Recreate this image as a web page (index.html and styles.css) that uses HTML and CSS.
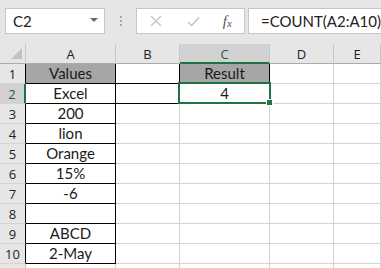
FILE: index.html
```html
<!DOCTYPE html>
<html lang="en">
<head>
    <meta charset="UTF-8">
    <meta name="viewport" content="width=device-width, initial-scale=1.0">
    <title>COUNT example</title>
    <link rel="stylesheet" href="styles.css">
</head>
<body>
    <div class="toolbar">
        <div class="namebox">
            <span>C2</span>
            <svg class="dropdown" width="8" height="5" viewBox="0 0 8 5"><path d="M0 0 H8 L4 4 Z" fill="#6b6b6b"/></svg>
        </div>
        <div class="grip"><i></i><i></i><i></i></div>
        <div class="fxbox">
            <svg width="12" height="12" viewBox="0 0 12 12"><path d="M1 1 L11 11 M11 1 L1 11" stroke="#c2c2c2" stroke-width="1.3" fill="none"/></svg>
            <svg width="13" height="11" viewBox="0 0 13 11"><path d="M1 6 L4.5 9.5 L12 1.5" stroke="#c2c2c2" stroke-width="1.4" fill="none"/></svg>
            <span class="fx">f<sub>x</sub></span>
        </div>
        <div class="formula">=COUNT(A2:A10)</div>
    </div>

    <div class="sheet">
        <!-- column headers -->
        <div class="corner"><span class="tri"></span></div>
        <div class="colhead">A</div>
        <div class="colhead">B</div>
        <div class="colhead active">C</div>
        <div class="colhead">D</div>
        <div class="colhead">E</div>

        <div class="rowhead edge">1</div>
        <div class="cell boxed title">Values</div>
        <div class="cell boxed"></div>
        <div class="cell boxed title">Result</div>
        <div class="cell"></div>
        <div class="cell"></div>

        <div class="rowhead active">2</div>
        <div class="cell boxed">Excel</div>
        <div class="cell boxed"></div>
        <div class="cell boxed selected">4</div>
        <div class="cell"></div>
        <div class="cell"></div>

        <div class="rowhead edge">3</div>
        <div class="cell boxed">200</div>
        <div class="cell"></div>
        <div class="cell"></div>
        <div class="cell"></div>
        <div class="cell"></div>

        <div class="rowhead edge">4</div>
        <div class="cell boxed">lion</div>
        <div class="cell"></div>
        <div class="cell"></div>
        <div class="cell"></div>
        <div class="cell"></div>

        <div class="rowhead edge">5</div>
        <div class="cell boxed">Orange</div>
        <div class="cell"></div>
        <div class="cell"></div>
        <div class="cell"></div>
        <div class="cell"></div>

        <div class="rowhead edge">6</div>
        <div class="cell boxed">15%</div>
        <div class="cell"></div>
        <div class="cell"></div>
        <div class="cell"></div>
        <div class="cell"></div>

        <div class="rowhead edge">7</div>
        <div class="cell boxed">-6</div>
        <div class="cell"></div>
        <div class="cell"></div>
        <div class="cell"></div>
        <div class="cell"></div>

        <div class="rowhead edge">8</div>
        <div class="cell boxed"></div>
        <div class="cell"></div>
        <div class="cell"></div>
        <div class="cell"></div>
        <div class="cell"></div>

        <div class="rowhead edge">9</div>
        <div class="cell boxed">ABCD</div>
        <div class="cell"></div>
        <div class="cell"></div>
        <div class="cell"></div>
        <div class="cell"></div>

        <div class="rowhead edge">10</div>
        <div class="cell boxed">2-May</div>
        <div class="cell"></div>
        <div class="cell"></div>
        <div class="cell"></div>
        <div class="cell"></div>

        <div class="rowhead"></div>
        <div class="cell"></div>
        <div class="cell"></div>
        <div class="cell"></div>
        <div class="cell"></div>
        <div class="cell"></div>
    </div>
</body>
</html>
```

FILE: styles.css
```css
body {
    margin: 0;
    background-color: #fff;
    font-family: Lato, "Liberation Sans", sans-serif;
    overflow: hidden;
}

.toolbar {
    background-color: #e6e6e6;
    height: 44px;
    display: flex;
    align-items: flex-start;
    padding: 8px 0 0 5px;
    box-sizing: border-box;
}
.namebox {
    width: 102px;
    height: 26px;
    box-sizing: border-box;
    background-color: #fff;
    border: 1px solid #c6c6c6;
    display: flex;
    align-items: center;
    justify-content: space-between;
    padding: 0 6px 0 7px;
    font-size: 15px;
    color: #222;
}
.dropdown {
    margin-top: -2px;
}
.grip {
    width: 31px;
    height: 26px;
    display: flex;
    flex-direction: column;
    align-items: center;
    justify-content: center;
    gap: 2px;
}
.grip i {
    display: block;
    width: 2px;
    height: 2px;
    background-color: #a8a8a8;
}
.fxbox {
    width: 111px;
    height: 26px;
    box-sizing: border-box;
    background-color: #fff;
    border: 1px solid #c6c6c6;
    display: flex;
    align-items: center;
    padding: 0 0 0 13px;
    gap: 25px;
}
.fx {
    font-family: "Liberation Serif", serif;
    font-style: italic;
    font-size: 15px;
    color: #555;
    margin-left: -2px;
}
.fx sub {
    font-size: 11px;
    vertical-align: -1px;
}
.formula {
    flex: 1;
    height: 26px;
    margin-left: 3px;
    margin-right: -1px;
    box-sizing: border-box;
    background-color: #fff;
    border: 1px solid #c6c6c6;
    font-size: 15px;
    color: #222;
    padding: 3px 0 0 12px;
}

.sheet {
    display: grid;
    grid-template-columns: 26px 90px 64px 90px 64px 1fr;
    grid-auto-rows: 20px;
}
.sheet > div {
    box-sizing: border-box;
    border-right: 1px solid #d4d4d4;
    border-bottom: 1px solid #d4d4d4;
    display: flex;
    align-items: flex-end;
    justify-content: center;
}

.corner {
    background-color: #e6e6e6;
    position: relative;
    border-bottom-color: #ababab !important;
    border-right-color: #c6c6c6 !important;
}
.tri {
    position: absolute;
    right: 3px;
    bottom: 4px;
    width: 0;
    height: 0;
    border-left: 11px solid transparent;
    border-bottom: 11px solid #c2c2c2;
}
.colhead {
    background-color: #e6e6e6;
    border-right-color: #c6c6c6 !important;
    border-bottom-color: #ababab !important;
    font-family: "Open Sans", sans-serif;
    font-size: 13px;
    color: #222;
    align-items: center !important;
    padding-top: 1px;
}
.colhead.active {
    background-color: #d2d2d2;
    border-bottom: 2px solid #217346 !important;
    color: #1e5c3a;
}
.rowhead {
    background-color: #e6e6e6;
    border-bottom-color: #d4d4d4 !important;
    border-right-color: #c6c6c6 !important;
    font-family: "Open Sans", sans-serif;
    font-size: 13px;
    color: #222;
    align-items: center !important;
}
.rowhead.edge {
    border-right-color: #000 !important;
}
.rowhead.active {
    background-color: #d2d2d2;
    border-right: 2px solid #217346 !important;
    color: #1e5c3a;
}

.cell {
    font-size: 15px;
    color: #1a1a1a;
    padding-bottom: 1px;
}
.boxed {
    border-right-color: #000 !important;
    border-bottom-color: #000 !important;
}
.title {
    background-color: #a6a6a6;
}
.selected {
    position: relative;
}
.selected::before {
    content: "";
    position: absolute;
    top: -2px;
    left: -2px;
    right: -2px;
    bottom: -1px;
    border: 2px solid #217346;
}
.selected::after {
    content: "";
    position: absolute;
    right: -4px;
    bottom: -3px;
    width: 5px;
    height: 5px;
    background-color: #217346;
    border: 1px solid #fff;
}
```
